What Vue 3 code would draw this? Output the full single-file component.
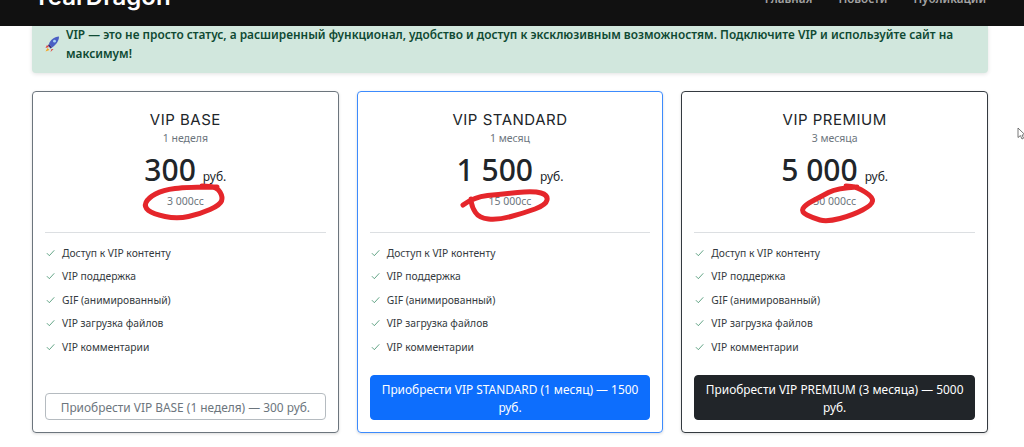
<script setup>
const features = ['Доступ к VIP контенту', 'VIP поддержка', 'GIF (анимированный)', 'VIP загрузка файлов', 'VIP комментарии']

// кольцо от руки, точки в координатах карточки
function ring(p) {
  let d = `M${p[0][0]} ${p[0][1]}`
  for (let i = 1; i < p.length - 1; i++) {
    const mx = (p[i][0] + p[i + 1][0]) / 2
    const my = (p[i][1] + p[i + 1][1]) / 2
    d += ` Q${p[i][0]} ${p[i][1]} ${mx} ${my}`
  }
  const last = p[p.length - 1]
  return d + ` L${last[0]} ${last[1]}`
}

const plans = [
  {
    name: 'VIP BASE', period: '1 неделя', price: '300', coins: '3 000cc', cls: 'base',
    btn: 'Приобрести VIP BASE (1 неделя) — 300 руб.',
    ring: ring([[185, 96], [155, 96], [131, 99], [116, 107], [112, 116], [121, 123], [145, 128], [168, 123], [188, 114], [191, 106], [185, 96], [170, 95]]),
  },
  {
    name: 'VIP STANDARD', period: '1 месяц', price: '1 500', coins: '15 000cc', cls: 'standard',
    btn: 'Приобрести VIP STANDARD (1 месяц) — 1500 руб.',
    ring: ring([[106, 114], [117, 106], [144, 103], [177, 100], [191, 104], [189, 114], [167, 122], [141, 129], [122, 127], [115, 116], [114, 108]]),
  },
  {
    name: 'VIP PREMIUM', period: '3 месяца', price: '5 000', coins: '30 000cc', cls: 'premium',
    btn: 'Приобрести VIP PREMIUM (3 месяца) — 5000 руб.',
    ring: ring([[176, 96], [156, 97], [139, 106], [124, 114], [120, 121], [132, 127], [146, 131], [172, 124], [191, 114], [192, 106], [176, 96], [165, 95]]),
  },
]
</script>

<template>
  <header class="topbar">
    <div class="logo">YearDragon</div>
    <nav class="menu">
      <a>Главная</a>
      <a>Новости</a>
      <a>Публикации</a>
    </nav>
  </header>

  <main class="page">
    <div class="note">
      <svg class="rocket" viewBox="0 0 16 18" width="16" height="18">
        <path d="M3 10 L1.5 13 L5 12 Z" fill="#e0433f" />
        <path d="M7.5 14 L6.5 17 L9.5 14 Z" fill="#e0433f" />
        <path d="M3.5 13 L1.5 16.5 L5.5 15 Z" fill="#f5a623" />
        <path d="M5 9 C6 5 10 2 15 1.5 C15 6 12 10 8 12.5 Z" fill="#4a5fc4" />
        <path d="M5 9 L8 12.5 L6.5 13.5 L4 10.5 Z" fill="#3b2a7a" />
        <circle cx="10.5" cy="6.2" r="1.4" fill="#a9d4f5" />
      </svg>
      <p>VIP — это не просто статус, а расширенный функционал, удобство и доступ к эксклюзивным возможностям. Подключите VIP и используйте сайт на максимум!</p>
    </div>

    <section class="plans">
      <article v-for="p in plans" :key="p.name" class="card" :class="p.cls">
        <h3>{{ p.name }}</h3>
        <div class="period">{{ p.period }}</div>
        <div class="price"><b>{{ p.price }}</b><span>руб.</span></div>
        <div class="coins">{{ p.coins }}</div>
        <hr />
        <ul>
          <li v-for="f in features" :key="f">
            <svg viewBox="0 0 10 8" width="9" height="8"><path d="M1 4.2 L3.7 7 L9.2 1" fill="none" stroke="#3f8f6b" stroke-width="0.9" /></svg>
            {{ f }}
          </li>
        </ul>
        <button class="buy">{{ p.btn }}</button>
        <svg class="scribble"><path :d="p.ring" fill="none" stroke="#e5262b" stroke-width="5" stroke-linecap="round" /></svg>
      </article>
    </section>

    <svg class="cursor" viewBox="0 0 9 13" width="9" height="13">
      <path d="M1 1 L1 10.5 L3.4 8.6 L5 12 L6.6 11.2 L5 8 L8 7.8 Z" fill="#fff" stroke="#555" stroke-width="0.8" />
    </svg>
  </main>
</template>

<style>
html, body {
  margin: 0;
  height: 447px;
  overflow: hidden;
  background: #fff;
}
</style>

<style scoped>
.topbar {
  height: 26px;
  background: #111;
  display: flex;
  justify-content: space-between;
  align-items: flex-end;
  padding: 0 38px 0 33px;
  overflow: hidden;
  font-family: "Noto Sans", sans-serif;
}
.logo {
  font-family: Inter, sans-serif;
  font-size: 24px;
  font-weight: 600;
  line-height: 30px;
  color: #fff;
  margin-bottom: 14px;
}
.menu {
  display: flex;
  gap: 26px;
  margin-bottom: 18px;
}
.menu a {
  font-size: 11.6px;
  font-weight: 600;
  line-height: 18px;
  color: #a3a3a3;
}
.page {
  position: relative;
  padding: 0 36px 0 32px;
  font-family: "Noto Sans", sans-serif;
}
.note {
  display: flex;
  align-items: center;
  gap: 6px;
  height: 47px;
  padding: 0 12px 12px 12px;
  box-sizing: border-box;
  background: #d1e7dd;
  border-radius: 0 0 4px 4px;
  box-shadow: 0 1px 4px rgba(0, 0, 0, 0.12);
  color: #0f4a33;
  font-size: 11.85px;
  font-weight: 600;
  line-height: 19px;
}
.note p {
  margin: 0;
}
.rocket {
  flex: none;
}
.plans {
  display: grid;
  grid-template-columns: repeat(3, 1fr);
  gap: 18px;
  margin-top: 18px;
}
.card {
  position: relative;
  display: flex;
  flex-direction: column;
  height: 342px;
  box-sizing: border-box;
  padding: 18px 12px 12px;
  border: 1px solid #6c757d;
  border-radius: 4px;
  box-shadow: 0 1px 3px rgba(0, 0, 0, 0.15);
  text-align: center;
  color: #212529;
}
.card.standard {
  border-color: #3d8bfd;
}
.card.premium {
  border-color: #343a40;
}
h3 {
  margin: 0;
  font-family: Inter, sans-serif;
  font-size: 15px;
  font-weight: 400;
  line-height: 20px;
  letter-spacing: 0.5px;
}
.period {
  font-size: 10.5px;
  line-height: 16px;
  color: #6c757d;
}
.price {
  line-height: 40px;
  margin-top: 4px;
}
.price b {
  font-size: 30px;
  font-weight: 500;
}
.price span {
  font-size: 12px;
  margin-left: 7px;
}
.coins {
  font-size: 10.5px;
  line-height: 16px;
  color: #6c757d;
  margin-top: -4px;
}
hr {
  width: 100%;
  margin: 23px 0 0;
  border: 0;
  border-top: 1px solid #dcdfe2;
}
ul {
  list-style: none;
  margin: 8px 0 0;
  padding: 0;
  text-align: left;
}
li {
  display: flex;
  align-items: center;
  gap: 7px;
  padding-left: 1px;
  height: 23.5px;
  font-size: 10.3px;
  color: #343a40;
}
.buy {
  margin-top: auto;
  width: 100%;
  padding: 3.5px 8px;
  border: 1px solid #b5bbc0;
  border-radius: 4px;
  background: #fff;
  color: #6c757d;
  font-family: "Noto Sans", sans-serif;
  font-size: 11.9px;
  line-height: 18px;
}
.standard .buy {
  background: #0d6efd;
  border-color: #0d6efd;
  color: #fff;
}
.premium .buy {
  background: #212529;
  border-color: #212529;
  color: #fff;
}
.scribble {
  position: absolute;
  left: -1px;
  top: -1px;
  width: 100%;
  height: 100%;
  overflow: visible;
  pointer-events: none;
}
.cursor {
  position: absolute;
  left: 1017px;
  top: 101px;
}
</style>
